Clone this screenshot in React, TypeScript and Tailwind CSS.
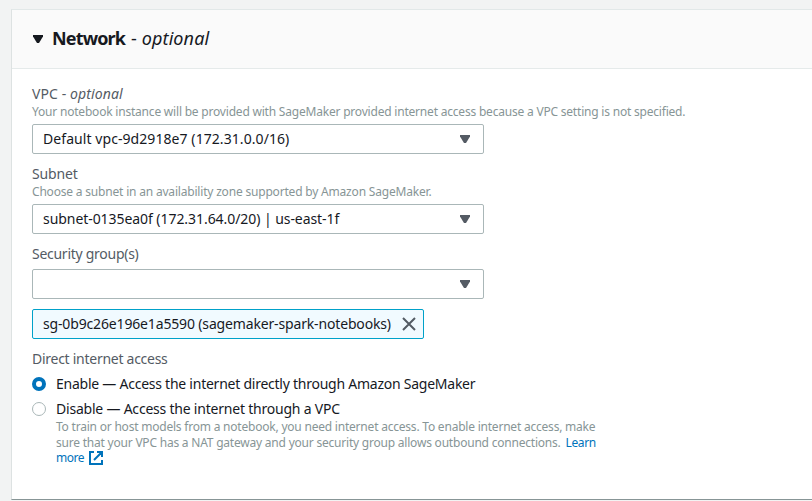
import React from "react";

function Caret({ className = "" }: { className?: string }) {
  return (
    <svg width="12" height="10" viewBox="0 0 12 10" className={className} fill="currentColor">
      <path d="M1 1h10v1.5L7 9H5L1 2.5z" />
    </svg>
  );
}

function Select({ children, className = "" }: { children?: React.ReactNode; className?: string }) {
  return (
    <div className={`flex h-[30px] w-[452px] items-center justify-between rounded-[2px] border border-[#aab7b8] bg-white pr-3 pl-[10px] ${className}`}>
      <span className="whitespace-nowrap">{children}</span>
      <Caret className="text-[#545b64]" />
    </div>
  );
}

export default function App() {
  return (
    <div className="h-[501px] w-full overflow-hidden bg-[#f2f3f3] pt-[9px] pl-[11px] font-['Noto_Sans',sans-serif] text-[14px] leading-5 text-[#16191f]">
      <section className="h-[491px] border-t border-b border-l border-t-[#e2e8e8] border-b-[#879596] border-l-[#dde2e2] bg-white">
        <header className="flex h-[59px] items-center border-b border-[#e5eaea] bg-[#fafafa] pl-5 text-[18px]">
          <Caret className="mr-2" />
          <h2 className="flex gap-[6px] pb-[2px] whitespace-nowrap">
            <span className="font-bold tracking-[-0.85px]">Network</span>
            <span className="tracking-[0.1px]">- <i>optional</i></span>
          </h2>
        </header>
        <div className="pt-[15px] pl-5">
          <div className="tracking-[0.1px] text-[#545b64]"><span>VPC - </span><i>optional</i></div>
          <div className="text-[12px] leading-4 tracking-[-0.203px] whitespace-nowrap text-[#879596]">Your notebook instance will be provided with SageMaker provided internet access because a VPC setting is not specified.</div>
          <Select className="mt-1 tracking-[0.07px]">Default vpc-9d2918e7 (172.31.0.0/16)</Select>
          <div className="mt-[10px] tracking-[-0.17px] text-[#545b64]">Subnet</div>
          <div className="text-[12px] leading-4 tracking-[-0.19px] whitespace-nowrap text-[#879596]">Choose a subnet in an availability zone supported by Amazon SageMaker.</div>
          <Select className="mt-1 tracking-[-0.06px]">subnet-0135ea0f (172.31.64.0/20) | us-east-1f</Select>
          <div className="mt-[10px] tracking-[-0.27px] text-[#545b64]">Security group(s)</div>
          <Select className="mt-[5px]" />
          <div className="mt-[10px] flex h-[30px] w-[392px] items-center justify-between rounded-[2px] border border-[#00a1c9] bg-[#f1faff] pr-[7px] pl-[10px]">
            <span className="tracking-[-0.155px] whitespace-nowrap">sg-0b9c26e196e1a5590 (sagemaker-spark-notebooks)</span>
            <svg width="14" height="14" viewBox="0 0 14 14" fill="none" stroke="#545b64" strokeWidth="2">
              <path d="M1 1l12 12M13 1L1 13" />
            </svg>
          </div>
          <div className="mt-[10px] tracking-[-0.27px] text-[#545b64]">Direct internet access</div>
          <div className="mt-[5px] flex items-center gap-[10px]">
            <span className="size-[14px] rounded-full border-4 border-[#0073bb] bg-white" />
            <span className="tracking-[-0.245px] whitespace-nowrap">Enable — Access the internet directly through Amazon SageMaker</span>
          </div>
          <div className="mt-[5px] flex items-center gap-[10px]">
            <span className="size-[14px] rounded-full border border-[#aab7b8] bg-white" />
            <span className="tracking-[-0.215px] whitespace-nowrap">Disable — Access the internet through a VPC</span>
          </div>
          <div className="pl-6 text-[12px] leading-[15.5px] tracking-[-0.213px] whitespace-nowrap text-[#879596]">
            <div>To train or host models from a notebook, you need internet access. To enable internet access, make</div>
            <div className="flex gap-[5px]">
              <span>sure that your VPC has a NAT gateway and your security group allows outbound connections.</span>
              <span className="tracking-[-0.4px] text-[#0073bb]">Learn</span>
            </div>
            <div className="flex items-center gap-[5px] text-[#0073bb]">
              <span className="tracking-[-0.45px]">more</span>
              <svg width="14" height="14" viewBox="0 0 14 14" fill="none" stroke="currentColor" strokeWidth="2">
                <path d="M5 1H1v12h12V9M8 1h5v5M13 1L5 9" />
              </svg>
            </div>
          </div>
        </div>
      </section>
    </div>
  );
}
